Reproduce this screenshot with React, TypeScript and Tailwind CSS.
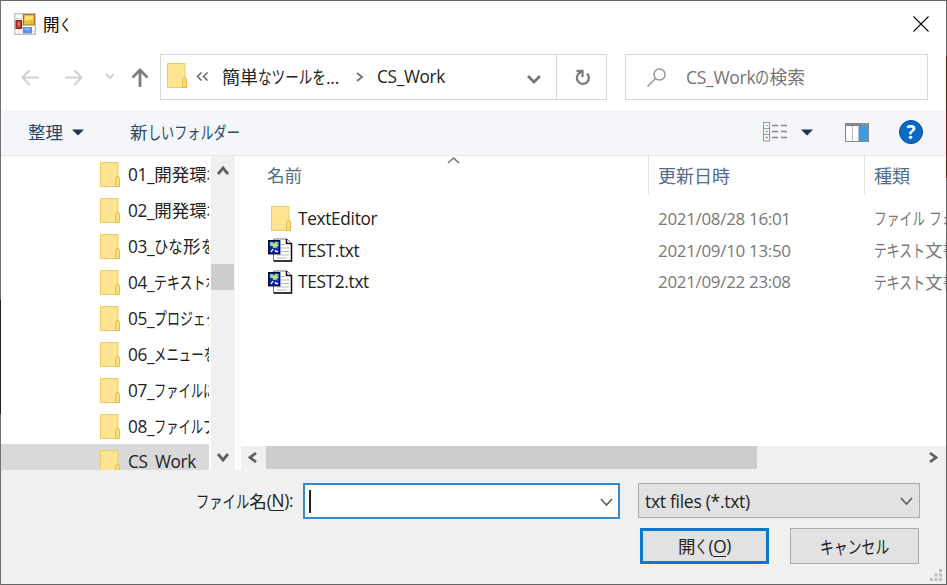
import React from "react";

const kanaPattern = /[ぁ-ゖァ-ー]/;
const hanPattern = /[一-龯]/;

const runKind = (char: string) => {
  if (kanaPattern.test(char)) return "kana";
  if (hanPattern.test(char)) return "han";
  return "latin";
};

const splitRuns = (text: string) => {
  const runs: { kind: string; text: string }[] = [];
  for (const char of text) {
    const kind = runKind(char);
    const last = runs[runs.length - 1];
    if (last && last.kind === kind) last.text += char;
    else runs.push({ kind, text: char });
  }
  return runs;
};

type LabelProps = {
  text: string;
  size?: number;
  kana?: number;
  className?: string;
};

// UI text with condensed kana, the way the system dialog font sets it
const Label: React.FC<LabelProps> = ({
  text,
  size = 17.5,
  kana = 0.74,
  className = "",
}) => (
  <span
    className={`inline-flex shrink-0 items-baseline whitespace-pre leading-6 ${className}`}
  >
    {splitRuns(text).map((run, index) => {
      if (run.kind === "kana") {
        return (
          <span
            key={index}
            className="inline-block origin-left font-['Noto_Sans_CJK_JP',sans-serif]"
            style={{
              fontSize: size,
              width: run.text.length * size * kana,
              transform: `scaleX(${kana})`,
            }}
          >
            {run.text}
          </span>
        );
      }
      if (run.kind === "han") {
        return (
          <span
            key={index}
            className="font-['Noto_Sans_CJK_JP',sans-serif]"
            style={{ fontSize: size }}
          >
            {run.text}
          </span>
        );
      }
      return (
        <span
          key={index}
          className="font-['Open_Sans','Noto_Sans',sans-serif] tracking-[-0.3px]"
          style={{ fontSize: size * 0.985 }}
        >
          {run.text}
        </span>
      );
    })}
  </span>
);

const FolderIcon = () => (
  <svg width="20" height="25" viewBox="0 0 20 25" className="shrink-0">
    <path d="M.5.5h17.5v14l1.5 1v9H.5z" fill="#ffe591" stroke="#edcb62" />
    <path d="M15.5 24.5v-8l1-2h2l1 2v8z" fill="#fbdc79" stroke="#e6bf50" />
  </svg>
);

const TextFileIcon = () => (
  <svg width="25" height="24" viewBox="0 0 25 24" className="shrink-0">
    <path d="M5.5 1h13.500l4.500 4.500v17.500H5.500z" fill="#fff" stroke="#777" />
    <path d="M18.500 1v4.500h5v17.500H6" fill="none" stroke="#111" strokeWidth="1.500" />
    <path d="M13 6.500h4M13 10h8M13 13.500h8M9 17h12M9 20h10" stroke="#b9b9b9" />
    <rect x=".7" y="2.700" width="11" height="13" fill="#1428b8" stroke="#000a30" strokeWidth="1.400" />
    <path d="M2 4h3.500v4H2zM7 4h3.500v3H7zM5 8h4v2H5z" fill="#3fd0d8" />
    <path d="M3 5.500l2.500 1.500 3-3M5 9l3-2 2 1" stroke="#f2e83b" strokeWidth="1.400" fill="none" />
    <path d="M3 14l2-3M7 12l1 1.500h2" stroke="#fff" strokeWidth="1.300" fill="none" />
  </svg>
);

const FormIcon = () => (
  <svg width="22" height="22" viewBox="0 0 22 22" className="shrink-0">
    <rect x=".7" y=".7" width="20.600" height="20.600" fill="#fff" stroke="#c2c2c2" strokeWidth="1.400" />
    <path d="M1 5.500h8M5 15v6M18 18.500h3M8.500 1v20" stroke="#d8d8d8" />
    <rect x="9.500" y="1.500" width="11" height="10.500" fill="#eebf2c" stroke="#9d7a28" />
    <path d="M11 3h8v3l-8 2z" fill="#ffe07a" />
    <rect x="2" y="7.500" width="5.500" height="8" fill="#c6392e" stroke="#952018" />
    <path d="M4 9.500h1.500v3H4z" fill="#f3a297" />
    <rect x="9.500" y="14.500" width="8" height="5.500" fill="#5c95e8" stroke="#6a92cf" />
    <path d="M11 15.500h5v1.500h-5z" fill="#9fc5ff" />
  </svg>
);

type ChevronProps = {
  direction: "up" | "down" | "left" | "right";
  width: number;
  height: number;
  stroke?: number;
};

const Chevron: React.FC<ChevronProps> = ({
  direction,
  width,
  height,
  stroke = 2,
}) => {
  const paths = {
    up: "M0 10L5 0l5 10",
    down: "M0 0l5 10L10 0",
    left: "M10 0L0 5l10 5",
    right: "M0 0l10 5-10 5",
  };
  return (
    <svg
      width={width}
      height={height}
      viewBox="0 0 10 10"
      preserveAspectRatio="none"
      className="shrink-0 overflow-visible"
      fill="none"
      stroke="currentColor"
      strokeWidth={stroke}
    >
      <path d={paths[direction]} vectorEffect="non-scaling-stroke" />
    </svg>
  );
};

const Triangle = () => (
  <svg width="12" height="7" viewBox="0 0 12 7" className="shrink-0">
    <path d="M0 .5h12L6 6.500z" fill="#1e3558" />
  </svg>
);

const TitleBar = () => (
  <div className="flex h-[45px] items-center pl-[13px] pr-[17px]">
    <FormIcon />
    <Label text="開く" size={16.5} kana={0.68} className="ml-[7px] text-black" />
    <svg width="16" height="16" viewBox="0 0 16 16" className="ml-auto">
      <path d="M.5.5l15 15M15.500.5l-15 15" stroke="#000" strokeWidth="1.100" />
    </svg>
  </div>
);

const NavigationBar = () => (
  <div className="flex h-16 items-start pl-5 pr-[18px] pt-2">
    <div className="flex h-[46px] w-[139px] shrink-0 items-center text-[#d2d2d2]">
      <svg width="18" height="17" viewBox="0 0 18 17" fill="none" stroke="currentColor" strokeWidth="2.200">
        <path d="M18 8.500H2M9 1L1.500 8.500 9 16" />
      </svg>
      <svg width="18" height="17" viewBox="0 0 18 17" fill="none" stroke="currentColor" strokeWidth="2.200" className="ml-[26px]">
        <path d="M0 8.500h16M9 1l7.500 7.500L9 16" />
      </svg>
      <span className="mb-[2px] ml-[23px] flex">
        <Chevron direction="down" width={8} height={4} />
      </span>
      <svg width="18" height="19" viewBox="0 0 18 19" fill="none" stroke="#7d7d7d" strokeWidth="2.800" className="ml-[17px]">
        <path d="M9 19V2M1.500 9.500L9 2l7.500 7.500" />
      </svg>
    </div>
    <div className="flex h-[46px] w-[447px] shrink-0 items-center border border-[#d9d9d9] bg-white text-[#222]">
      <span className="mb-[3px] ml-[6px] flex">
        <FolderIcon />
      </span>
      <svg width="13" height="9" viewBox="0 0 13 9" className="mb-px ml-[9px]" fill="none" stroke="#666" strokeWidth="1.500">
        <path d="M5.500.5l-4 4 4 4M11.500.5l-4 4 4 4" />
      </svg>
      <Label text="簡単なツールを..." size={18} kana={0.755} className="mb-px ml-[13px] w-[120px]" />
      <span className="ml-[15px] flex text-[#777]">
        <Chevron direction="right" width={5} height={8} />
      </span>
      <Label text="CS_Work" className="ml-[15px] w-[70px]" />
      <span className="ml-auto flex pr-4 pt-[3px] text-[#777]">
        <Chevron direction="down" width={12} height={6} stroke={2.8} />
      </span>
      <div className="flex h-full w-[50px] items-center justify-center border-l border-[#d9d9d9]">
        <svg width="16" height="17" viewBox="0 0 16 17" fill="none" stroke="#7c7c7c" strokeWidth="2.300" className="ml-[3px]">
          <path d="M12 4.500a6 6 0 1 1-8.500.3L6.500 2.500" />
          <path d="M1.500 2h6v6" />
        </svg>
      </div>
    </div>
    <div className="ml-[18px] flex h-[46px] flex-1 items-center border border-[#d9d9d9] bg-white pl-[21px]">
      <svg width="19" height="19" viewBox="0 0 19 19" fill="none" stroke="#969298" strokeWidth="1.400">
        <circle cx="12.500" cy="6.500" r="5.500" />
        <path d="M8.500 10.500L.5 18.500" />
      </svg>
      <Label text="CS_Workの検索" size={17.8} kana={0.8} className="mb-px ml-5 text-[#737373]" />
    </div>
  </div>
);

const Toolbar = () => (
  <div className="flex h-[46px] items-center border-b border-[#e9eaec] bg-[#f4f6f9] pb-px pl-[27px] pr-[23px] text-[#27466b]">
    <Label text="整理" className="mb-px" />
    <span className="ml-[9px] mt-px flex">
      <Triangle />
    </span>
    <Label text="新しいフォルダー" kana={0.75} className="mb-px ml-[46px]" />
    <svg width="25" height="20" viewBox="0 0 25 20" className="ml-auto" fill="none">
      <path d="M.5.5h6v18.500h-6zM.5 6.500h6M.5 12.500h6" fill="#fff" stroke="#999" strokeWidth="1.200" />
      <path d="M9 3.500h6M18 3.500h6M9 9.500h6M18 9.500h6M9 15.500h6M18 15.500h6" stroke="#858585" strokeWidth="1.600" />
      <path d="M3 3.500h1.500" stroke="#5c8b9b" />
      <path d="M3 9.500h1.500" stroke="#168eee" strokeWidth="1.500" />
      <path d="M3 15.500h1.500" stroke="#d83b29" strokeWidth="1.500" />
    </svg>
    <span className="ml-[13px] mt-px flex">
      <Triangle />
    </span>
    <svg width="24" height="19" viewBox="0 0 24 19" className="ml-8 mt-px">
      <path d="M.5.5h23v18H.5z" fill="#fff" stroke="#858990" />
      <path d="M14 3h9v15h-9z" fill="#3c9be5" />
      <path d="M0 0h24v3H0z" fill="#81858b" />
      <path d="M7.500 3v15M13.500 3v15" stroke="#bbb" />
      <path d="M.5.5h23v18H.5z" fill="none" stroke="#858990" />
      <path d="M18 1.500h1M21 1.500h1" stroke="#9cc8ee" />
    </svg>
    <div className="ml-[30px] flex size-6 items-center justify-center rounded-full border border-[#084c93] bg-[#0869c7] font-['Open_Sans',sans-serif] text-[19px] font-bold leading-none text-white">
      ?
    </div>
  </div>
);

const folders = [
  { name: "01_開発環境", kana: 0.74 },
  { name: "02_開発環境", kana: 0.74 },
  { name: "03_ひな形を", kana: 0.82 },
  { name: "04_テキストボ", kana: 0.74 },
  { name: "05_プロジェク", kana: 0.74 },
  { name: "06_メニューを", kana: 0.71 },
  { name: "07_ファイルに", kana: 0.7 },
  { name: "08_ファイルプ", kana: 0.7 },
  { name: "CS_Work", kana: 0.74 },
];

const FolderTree = () => (
  <div className="flex w-[234px] shrink-0">
    <div className="w-[208px] overflow-hidden">
      {folders.map((folder) => (
        <div
          key={folder.name}
          className={`flex h-9 items-center pl-[99px] text-[#222] ${
            folder.name === "CS_Work" ? "bg-[#d9d9d9]" : ""
          }`}
        >
          <FolderIcon />
          <Label text={folder.name} kana={folder.kana} className="ml-2" />
        </div>
      ))}
    </div>
    <div className="ml-[2px] flex w-6 flex-col items-center bg-[#f0f0f0] pr-px text-[#606060]">
      <div className="flex h-[108px] pt-3">
        <Chevron direction="up" width={10} height={6} stroke={2.8} />
      </div>
      <div className="h-[26px] w-[23px] bg-[#cdcdcd]" />
      <div className="mt-auto flex pb-[10px]">
        <Chevron direction="down" width={10} height={6} stroke={2.8} />
      </div>
    </div>
  </div>
);

const files = [
  { name: "TextEditor", date: "2021/08/28 16:01", type: "ファイル フォ", folder: true },
  { name: "TEST.txt", date: "2021/09/10 13:50", type: "テキスト文書", folder: false },
  { name: "TEST2.txt", date: "2021/09/22 23:08", type: "テキスト文書", folder: false },
];

const FileList = () => (
  <div className="ml-[3px] flex min-w-0 flex-1 flex-col overflow-hidden border-l border-[#f5f5f5]">
    <div className="relative flex h-[38px] shrink-0 text-[#526c8c]">
      <div className="w-[409px] shrink-0 pl-7 pt-[7px]">
        <Label text="名前" size={17.5} />
      </div>
      <div className="w-[216px] shrink-0 border-l border-[#e3e3e3] pl-[9px] pt-[7px]">
        <Label text="更新日時" size={18} />
      </div>
      <div className="flex-1 border-l border-[#e3e3e3] pl-[9px] pt-[7px]">
        <Label text="種類" size={18} />
      </div>
      <span className="absolute left-[209px] top-[2px] flex text-[#777]">
        <Chevron direction="up" width={11} height={5} stroke={1.6} />
      </span>
    </div>
    <div className="mt-[9px]">
      {files.map((file) => (
        <div key={file.name} className="flex h-[31.5px] items-center">
          <div className="flex w-[419px] shrink-0 items-center pl-7">
            <div className="flex w-[31px] shrink-0">
              {file.folder ? (
                <span className="ml-[4px] flex">
                  <FolderIcon />
                </span>
              ) : (
                <span className="ml-px flex">
                  <TextFileIcon />
                </span>
              )}
            </div>
            <Label text={file.name} className="mt-px text-[#222]" />
          </div>
          <Label text={file.date} size={17.2} className="mt-px w-[216px] text-[#787878]" />
          <Label text={file.type} kana={0.73} className="text-[#787878]" />
        </div>
      ))}
    </div>
    <div className="ml-[2px] mt-auto flex h-6 items-center bg-[#f0f0f0] pb-px pl-[9px] pr-[10px] text-[#606060]">
      <Chevron direction="left" width={6} height={9} stroke={2.8} />
      <div className="ml-[10px] h-[23px] w-[491px] bg-[#cdcdcd]" />
      <span className="ml-auto flex">
        <Chevron direction="right" width={6} height={9} stroke={2.8} />
      </span>
    </div>
  </div>
);

const Footer = () => (
  <div className="flex h-[114px] flex-col bg-[#f0f0f0] pt-[13px] text-[#222]">
    <div className="flex h-9">
      <div className="flex w-[302px] shrink-0 pl-[195px] pt-[6px]">
        <Label text="ファイル名(" kana={0.76} />
        <Label text="N" className="h-[22px] border-b border-[#222]" />
        <Label text="):" />
      </div>
      <div className="flex w-[317px] shrink-0 items-center border-2 border-[#368bd0] bg-white pl-1 pr-[6px]">
        <div className="h-[23px] w-[2px] bg-[#222]" />
        <span className="ml-auto flex pt-[2px] text-[#606060]">
          <Chevron direction="down" width={11} height={6} stroke={1.7} />
        </span>
      </div>
      <div className="ml-[18px] flex h-[35px] w-[282px] items-center border border-[#acacac] bg-[#e2e2e2] pl-[6px] pr-[7px]">
        <Label text="txt files (*.txt)" size={17.8} />
        <span className="ml-auto flex text-[#606060]">
          <Chevron direction="down" width={11} height={6} stroke={1.7} />
        </span>
      </div>
    </div>
    <div className="mt-[9px] flex pl-[639px]">
      <button className="flex h-[36px] w-[129px] items-center justify-center border-[3px] border-[#0a78d3] bg-[#e2e2e2]">
        <Label text="開く(" />
        <Label text="O" className="h-[22px] border-b border-[#222]" />
        <Label text=")" />
      </button>
      <button className="ml-[21px] flex h-[36px] w-[129px] items-center justify-center border border-[#acacac] bg-[#e2e2e2] pb-px">
        <Label text="キャンセル" size={18} kana={0.77} />
      </button>
    </div>
    <svg width="12" height="12" viewBox="0 0 12 12" className="ml-auto mr-1 mt-auto mb-[3px]" fill="#bdbdbd">
      <path d="M9 0h3v3H9zM9 4.500h3v3H9zM4.500 4.500h3v3h-3zM0 9h3v3H0zM4.500 9h3v3h-3zM9 9h3v3H9z" />
    </svg>
  </div>
);

export default function App() {
  return (
    <div className="flex h-[585px] w-[947px] overflow-hidden bg-white">
      <div className="flex w-px shrink-0 flex-col bg-[#707070]">
        <div className="mt-[300px] h-[114px] bg-[#222]" />
      </div>
      <div className="flex w-[945px] flex-col border-y border-[#656565]">
        <TitleBar />
        <NavigationBar />
        <Toolbar />
        <div className="flex h-[314px] shrink-0 overflow-hidden">
          <FolderTree />
          <FileList />
        </div>
        <Footer />
      </div>
      <div className="flex w-px shrink-0 flex-col bg-[#656565]">
        <div className="mt-14 h-[122px] bg-[#681b20]" />
      </div>
    </div>
  );
}
